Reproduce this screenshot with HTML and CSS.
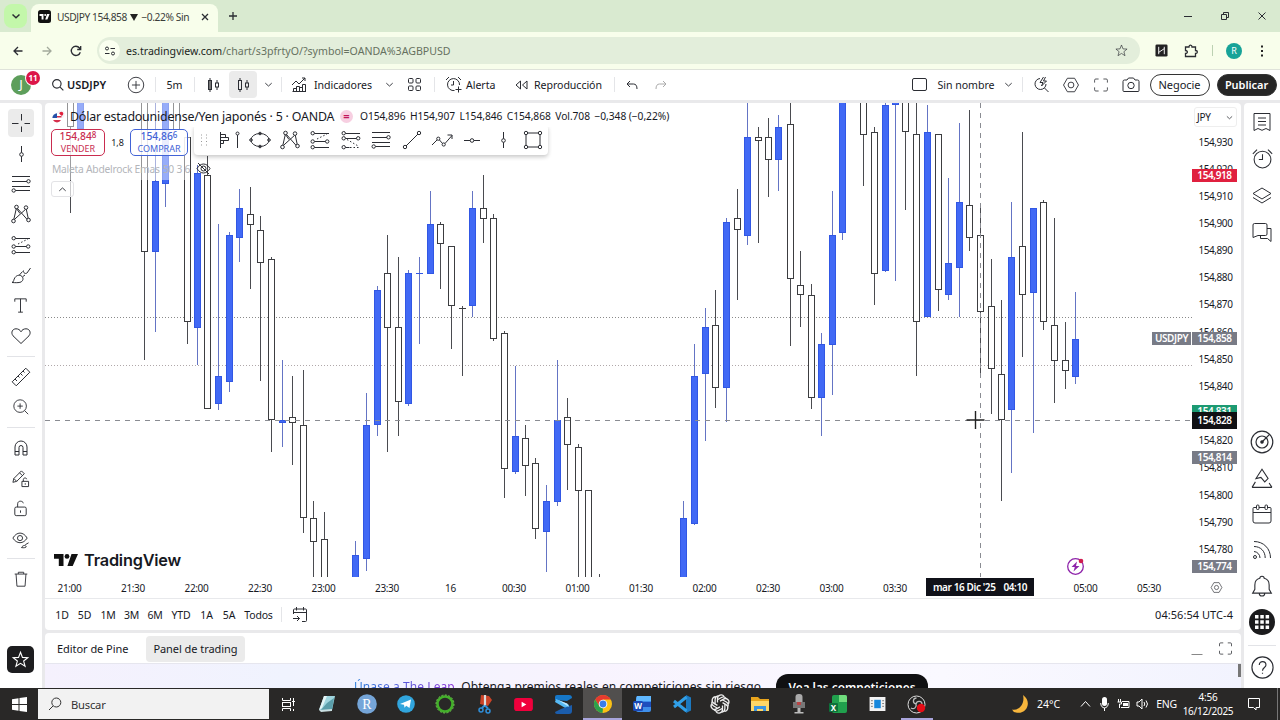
FILE: index.html
```html
<!DOCTYPE html>
<html lang="es">
<head>
<meta charset="utf-8">
<title>USDJPY 154,858 ▼ −0.22% Sin nombre</title>
<link rel="stylesheet" href="styles.css">
</head>
<body>
<svg class="defs" width="0" height="0">
  <symbol id="chev" viewBox="0 0 12 12"><path d="M2.5 4.5 6 7.7l3.5-3.2"/></symbol>
  <symbol id="search" viewBox="0 0 20 20"><circle cx="9" cy="9" r="6.5"/><path d="m14 14 5 5"/></symbol>
  <symbol id="pluscircle" viewBox="0 0 20 20"><circle cx="10" cy="10" r="8.6"/><path d="M10 5.5v9M5.5 10h9"/></symbol>
  <symbol id="hex" viewBox="0 0 20 20"><path d="M6 2.5h8l4.3 7.5L14 17.500H6L1.700 10z"/><circle cx="10" cy="10" r="3.200"/></symbol>
  <symbol id="cross" viewBox="0 0 20 20"><path d="M10.500 1v6.500M10.500 13.500V19M1 10.500h6.500M13.500 10.500H19"/></symbol>
  <symbol id="vline" viewBox="0 0 20 20"><path d="M10.500 2v6.700M10.500 12.300V18"/><circle cx="10.500" cy="10.500" r="1.800"/></symbol>
  <symbol id="hline" viewBox="0 0 20 20"><path d="M2 10.500h6.200M11.800 10.500H18"/><circle cx="10" cy="10.500" r="1.800"/></symbol>
  <symbol id="fib" viewBox="0 0 20 20"><path d="M1 2.500h18M1 7.500h15M1 12.500h18M4.500 16.500H19"/><circle cx="17.500" cy="7.300" r="1.700"/><circle cx="2.700" cy="16.500" r="1.700"/></symbol>
  <symbol id="pattern" viewBox="0 0 20 20"><path d="M2.800 15.500 5.300 4.500M6.500 4.500l9.500 10.800M3.700 15.200l10.800-9.800M5.800 5 9 9.500M15.300 5.300l1.900 9"/><circle cx="5.500" cy="3" r="1.800"/><circle cx="15" cy="3.600" r="1.800"/><circle cx="2.500" cy="17" r="1.800"/><circle cx="17.500" cy="16" r="1.800"/></symbol>
  <symbol id="forecast" viewBox="0 0 20 20"><path d="M4.500 3.500H19M4.500 11.500h11M4.500 17.500H19"/><path stroke-dasharray="1.500 2" d="m7 9 10-5"/><circle cx="2.700" cy="3.200" r="1.700"/><circle cx="2.700" cy="11.500" r="1.700"/><circle cx="17.200" cy="11.500" r="1.700"/><circle cx="2.700" cy="17.200" r="1.700"/></symbol>
  <symbol id="forecast2" viewBox="0 0 20 20"><path d="M4.500 3.500H19M4.500 8.500h11M4.500 17.500h4"/><path stroke-dasharray="1.500 2" d="m6 9.500 12 7M9 17.500h10"/><circle cx="2.700" cy="3.200" r="1.700"/><circle cx="2.700" cy="8.300" r="1.700"/><circle cx="17.200" cy="8.300" r="1.700"/><circle cx="2.700" cy="17.200" r="1.700"/></symbol>
  <symbol id="brush" viewBox="0 0 20 20"><path d="M1 17.500c2-.5 1.500-3 3-5 2-2.600 5-3 7-1 1.800 2 1 4.300-1 5.500-2.200 1-6 .7-9 .5zM8 10.500l3.500-4M11.500 11.800l2.500-1.800M12.500 5.500c-.5 2.500 2 3.700 3.500 2.500L19.500 3"/></symbol>
  <symbol id="text" viewBox="0 0 20 20"><path d="M4 6V3h12v3M10 3v14M7.500 17h5"/></symbol>
  <symbol id="heart" viewBox="0 0 20 20"><path d="M10 17.500 2 9.800C-.5 6.500 1.500 2.800 5 2.800c2.200 0 4 1 5 3 1-2 2.800-3 5-3 3.500 0 5.500 3.700 3 7z"/></symbol>
  <symbol id="ruler" viewBox="0 0 20 20"><path d="M1.200 14.800 14.800 1.200l4 4L5.200 18.800zM4 12l2 2M7 9l1.500 1.500M9.500 6.500l2 2M12 4l1.500 1.500"/></symbol>
  <symbol id="zoomin" viewBox="0 0 20 20"><circle cx="9" cy="9" r="7"/><path d="m14 14 4 4M9 6v6M6 9h6"/></symbol>
  <symbol id="magnet" viewBox="0 0 20 20"><path d="M4 17V9a6 6 0 0 1 12 0v8h-4V9.500a2 2 0 0 0-4 0V17zM4 13.500h4M12 13.500h4"/></symbol>
  <symbol id="penlock" viewBox="0 0 20 20"><path d="m2 14 1-4L11 2l3 3-8 8zM9 4l3 3M3 10l3 3M11.500 13h7v5.500h-7zM13 13v-2c0-2 3.500-2 3.500-.3M15 15v1.500"/></symbol>
  <symbol id="unlock" viewBox="0 0 20 20"><rect x="4" y="8.500" width="12" height="9" rx="1.500"/><path d="M7 8.500V5c0-3.500 5.500-3.500 6-.5M10 12v2.500"/></symbol>
  <symbol id="eye" viewBox="0 0 20 20"><path d="M2 8.500C6 1.500 13 1.500 17 8.500c-4 6.500-11 6.500-15 0z"/><circle cx="9.500" cy="8.500" r="2.700"/><path d="M11 18.500c1.500-2.500 4-3 5-1 .5 1-3 1.500-5 1zM15 15.500l3.500-2"/></symbol>
  <symbol id="trash" viewBox="0 0 20 20"><path d="M3 4.500h14M7 4.500v-2h6v2M4.500 4.500l1 13.500h9l1-13.500"/></symbol>
  <symbol id="star" viewBox="0 0 20 20"><path d="m10 1.500 2.300 6 6.300.3-4.900 4 1.700 6.200-5.400-3.500L4.600 18l1.700-6.200-4.900-4 6.300-.3z"/></symbol>
  <symbol id="list" viewBox="0 0 20 20"><path d="M2 1.500h16v17l-4-2-4 1.800-4-1.800-4 2zM6 6h8M6 9.500h8M6 13h8"/></symbol>
  <symbol id="alarm" viewBox="0 0 20 20"><circle cx="10" cy="11" r="8"/><path d="M10 6v5H6.500M.8 5.500l4-4M19.200 5.500l-4-4"/></symbol>
  <symbol id="layers" viewBox="0 0 20 20"><path d="m10 3 9 5.500-9 5.500-9-5.500zM1 12.500l9 5.500 9-5.500"/></symbol>
  <symbol id="chat" viewBox="0 0 20 20"><path d="M2.500 1.500h11q1.500 0 1.500 1.500v9q0 1.500-1.500 1.500H6L1 15.500V3q0-1.500 1.500-1.500zM15 6.500h4v13l-3.500-3H8.500v-3"/></symbol>
  <symbol id="radar" viewBox="0 0 20 20"><circle cx="10" cy="10" r="9"/><circle cx="10" cy="10" r="5"/><path d="m10 10 6.500-6.500"/><circle cx="10" cy="10" r="1" fill="#131722"/></symbol>
  <symbol id="mount" viewBox="0 0 20 20"><path d="m10 2 5.500 8.500-3 3L9 9.500 4.500 10.500zM1 18.500h18M1 18.500l3-5M19 18.500l-2.500-4"/></symbol>
  <symbol id="cal" viewBox="0 0 20 20"><path d="M2 3.500h2.500M7 3.500h6M15.500 3.500H18q1 0 1 1V17q0 2-2 2H3q-2 0-2-2V4.500q0-1 1-1M1 8.500h18"/><rect x="4.500" y="1" width="2.500" height="4.500" rx="1"/><rect x="13" y="1" width="2.500" height="4.500" rx="1"/></symbol>
  <symbol id="feed" viewBox="0 0 20 20"><circle cx="3" cy="17" r="1.500"/><path d="M2 11.500a6.500 6.500 0 0 1 6 6.500M2 6.500C8.500 6.500 13.200 11 13.200 18M2 1.500C11.500 1.500 18.500 8.500 18.500 18"/></symbol>
  <symbol id="bell" viewBox="0 0 20 20"><path d="M1.500 16.500h17L16.500 13V9c0-4-2.500-5.500-4.500-6 0-2.500-4-2.500-4 0-2 .5-4.500 2-4.500 6v4zM7.500 16.500c0 3.500 5 3.500 5 0"/></symbol>
  <symbol id="help" viewBox="0 0 20 20"><circle cx="10" cy="10" r="9.200"/><path d="M7.200 7.800c0-4 5.800-3.700 5.800 0 0 2.200-3 2.200-3 5M10 14.500v1"/></symbol>
  <symbol id="full" viewBox="0 0 20 20"><path d="M2 7V4q0-1.500 1.500-1.500H7M13 2.500h3.500Q18 2.500 18 4v3M18 13v3q0 1.500-1.500 1.500H13M7 17.500H3.500Q2 17.500 2 16v-3"/></symbol>
</svg>

<div class="tabs">
  <div class="tabsearch"><svg width="12" height="12"><use href="#chev"/></svg></div>
  <div class="tab">
    <svg class="fav" width="13" height="13" viewBox="0 0 13 13"><rect width="13" height="13" rx="2.500" fill="#111"/><path d="M1.500 4h4v5.500H3.600V6H1.500zM9 4h2.600L9.400 9.500H7.200z" fill="#fff"/><circle cx="7.200" cy="4.900" r="1" fill="#fff"/></svg>
    <span class="tabtitle">USDJPY 154,858 <svg width="8" height="7" viewBox="0 0 8 7"><path d="M0 0h8L4 7z"/></svg> −0.22% Sin</span>
    <svg class="x" width="8" height="8" viewBox="0 0 8 8"><path d="m1 1 6 6M7 1 1 7"/></svg>
  </div>
  <svg class="newtab" width="10" height="10" viewBox="0 0 10 10"><path d="M5 1v8M1 5h8"/></svg>
  <div class="win">
    <svg width="10" height="10" viewBox="0 0 10 10"><path d="M1 5.500h8"/></svg>
    <svg width="10" height="10" viewBox="0 0 10 10"><path d="M1.500 3.500h5v5h-5zM3.500 3.500v-2h5v5h-2"/></svg>
    <svg width="10" height="10" viewBox="0 0 10 10"><path d="m1.500 1.500 7 7M8.500 1.500l-7 7"/></svg>
  </div>
</div>
<div class="nav">
  <svg width="12" height="12" viewBox="0 0 12 12"><path d="M10.500 6H2M6 2 2 6l4 4"/></svg>
  <svg class="dim" width="12" height="12" viewBox="0 0 12 12"><path d="M1.500 6H10M6 2l4 4-4 4"/></svg>
  <svg width="12" height="12" viewBox="0 0 12 12"><path d="M10.300 7.200A4.600 4.600 0 1 1 9.500 3L10.500 4.300M10.700 1v3.500H7.200"/></svg>
  <div class="omni">
    <span class="site"><svg width="12" height="12" viewBox="0 0 12 12"><circle cx="3" cy="3.500" r="1.500"/><circle cx="9" cy="8.500" r="1.500"/><path d="M6.500 3.500H11M1 8.500h4.500"/></svg></span>
    <span class="url">es.tradingview.com<i>/chart/s3pfrtyO/?symbol=OANDA%3AGBPUSD</i></span>
    <svg width="13" height="13"><use href="#star"/></svg>
  </div>
  <svg class="ext" width="13" height="13" viewBox="0 0 14 14"><rect x=".5" y=".5" width="13" height="13" rx="1.500" fill="#222"/><path stroke="#fff" stroke-width="1" d="M4 3v8M10 3v8M4 9l6-4"/></svg>
  <svg class="puz" width="14" height="14" viewBox="0 0 14 14"><path d="M1.500 3H5c0-2.500 3-2.500 3 0h3.500v3.500c2.500 0 2.500 3 0 3v3h-10V9.500c2.500 0 2.500-3 0-3z"/></svg>
  <span class="navsep"></span><span class="prof">R</span>
  <svg class="dots" width="4" height="14" viewBox="0 0 4 14"><path d="M1 1.500h2v2H1zM1 6h2v2H1zM1 10.500h2v2H1z"/></svg>
</div>

<header class="top">
  <div class="ava"><span>J</span><b>11</b></div>
  <div><svg class="bold" width="13" height="13"><use href="#search"/></svg></div>
  <div class="l strong">USDJPY</div>
  <div><svg width="18" height="18"><use href="#pluscircle"/></svg></div>
  <div class="sep"></div><div>5m</div><div class="sep"></div>
  <div><svg width="14" height="16" viewBox="0 0 14 16"><rect x="2.500" y="3.500" width="3" height="9" fill="#777"/><path d="M4 1v2M4 13v2M11 3v3M11 10v3"/><rect x="9.500" y="6" width="3" height="4"/></svg></div>
  <div class="sel"><svg width="14" height="16" viewBox="0 0 14 16"><rect x="2.500" y="3.500" width="3" height="9"/><path d="M4 1v2M4 13v2M11 3v3M11 10v3"/><rect x="9.500" y="6" width="3" height="4"/></svg></div>
  <div><svg width="11" height="11"><use href="#chev"/></svg></div><div class="sep"></div>
  <div><svg width="16" height="16" viewBox="0 0 16 16"><path d="M2.500 15v-3.500h3V15M5.500 15V9.500h3V15M8.500 15v-4.500h3V15M11.500 15V7.500h3V15M1.500 14.500h13M1 8l4-4 3 3 6-6M11 1h3v3"/></svg></div>
  <div class="l">Indicadores</div>
  <div><svg width="11" height="11"><use href="#chev"/></svg></div>
  <div><svg width="15" height="15" viewBox="0 0 15 15"><rect x="1.500" y="1.500" width="4.500" height="4.500" rx="1"/><rect x="9" y="1.500" width="4.500" height="4.500" rx="1"/><rect x="1.500" y="9" width="4.500" height="4.500" rx="1"/><rect x="9" y="9" width="4.500" height="4.500" rx="1"/></svg></div>
  <div class="sep"></div>
  <div><svg width="17" height="17" viewBox="0 0 17 17"><path d="M14.500 9A6 6 0 1 0 9.500 14.500M8.500 5v4H6M1 4l3-3M16 4l-3-3M13.500 10.500v6M10.500 13.500h6"/></svg></div>
  <div class="l">Alerta</div>
  <div><svg width="13" height="10" viewBox="0 0 13 10"><path d="M5.500 1v8L1 5zM12 1v8L7.500 5z"/></svg></div>
  <div class="l">Reproducción</div><div class="sep"></div>
  <div><svg width="12" height="10" viewBox="0 0 12 10"><path d="M4 1 1 4l3 3M1 4h6.500Q11 4 11 9"/></svg></div>
  <div><svg class="gray" width="12" height="10" viewBox="0 0 12 10"><path d="m8 1 3 3-3 3M11 4H4.500Q1 4 1 9"/></svg></div>
  <div></div>
  <div><svg width="17" height="15" viewBox="0 0 17 15"><rect x="1.500" y="1.500" width="14" height="12" rx="1.500"/></svg></div>
  <div>Sin nombre</div>
  <div><svg width="11" height="11"><use href="#chev"/></svg></div><div class="sep"></div>
  <div><svg width="17" height="17" viewBox="0 0 17 17"><path d="M7 2.500A5.500 5.500 0 1 0 13 8M11.500 12l4 4M10.500 1 7 6.500h3L8.500 10l5-5H10.500l2-4"/></svg></div>
  <div><svg width="18" height="18"><use href="#hex"/></svg></div>
  <div><svg width="16" height="16"><use href="#full"/></svg></div>
  <div><svg width="18" height="16" viewBox="0 0 18 16"><path d="M1 4.500Q1 3 2.500 3H5l1.500-2h5L13 3h2.500Q17 3 17 4.500v9q0 1-1 1H2q-1 0-1-1z"/><circle cx="9" cy="8.500" r="3.200"/></svg></div>
  <div><span class="pill">Negocie</span></div>
  <div><span class="pill dark">Publicar</span></div>
</header>

<main class="app">
  <nav class="left">
    <div class="on"><svg width="20" height="20"><use href="#cross"/></svg></div>
    <div><svg width="20" height="20"><use href="#vline"/></svg></div>
    <div><svg width="20" height="20"><use href="#fib"/></svg></div>
    <div><svg width="20" height="20"><use href="#pattern"/></svg></div>
    <div><svg width="20" height="20"><use href="#forecast"/></svg></div>
    <div><svg width="20" height="20"><use href="#brush"/></svg></div>
    <div><svg width="19" height="19"><use href="#text"/></svg></div>
    <div><svg width="20" height="20"><use href="#heart"/></svg></div>
    <hr>
    <div><svg width="20" height="20"><use href="#ruler"/></svg></div>
    <div><svg width="18" height="18"><use href="#zoomin"/></svg></div>
    <hr>
    <div><svg width="20" height="20"><use href="#magnet"/></svg></div>
    <div><svg width="19" height="19"><use href="#penlock"/></svg></div>
    <div><svg width="19" height="19"><use href="#unlock"/></svg></div>
    <div><svg width="19" height="19"><use href="#eye"/></svg></div>
    <hr class="last">
    <div><svg width="18" height="18"><use href="#trash"/></svg></div>
    <div class="fav-btn"><svg width="17" height="17"><use href="#star"/></svg></div>
  </nav>

  <section class="mid">
    <div class="chart">
      <div class="plot">
        <svg id="canvas" width="1147" height="474" viewBox="45 103 1147 474"></svg>
        <div class="veil"></div>
        <div class="legend">
          <div class="title">
            <svg width="13" height="13" viewBox="0 0 13 13"><circle cx="8.800" cy="4.200" r="4" fill="#f4f4f8"/><circle cx="9.300" cy="3.800" r="2" fill="#e2213c"/><circle cx="5" cy="8" r="4.700" fill="#fff"/><path d="M1 10a4.500 4.500 0 0 0 8 0zM5 6h4.500v1.500H5z" fill="#d6304c"/><path d="M5 3.300V8H.4A4.700 4.700 0 0 1 5 3.300z" fill="#2450a8"/></svg>
            <span class="name">Dólar estadounidense/Yen japonés · 5 · OANDA</span>
            <span class="delay">=</span>
            <span class="ohlc">O154,896</span><span class="ohlc">H154,907</span><span class="ohlc">L154,846</span><span class="ohlc">C154,868</span><span class="ohlc">Vol.708</span><span class="ohlc">−0,348 (−0,22%)</span>
          </div>
          <div class="quote">
            <div class="btn sell"><b>154,84<sup>8</sup></b><span>VENDER</span></div>
            <span class="spread">1,8</span>
            <div class="btn buy"><b>154,86<sup>6</sup></b><span>COMPRAR</span></div>
          </div>
          <div class="ind"><span>Maleta Abdelrock Emas</span><span class="nums">50 3 6</span>
            <svg width="15" height="13" viewBox="0 0 15 13"><path d="M1 6.500c3.500-6 9.500-6 13 0-3.500 6-9.500 6-13 0zM2 1l11 11"/><circle cx="7.500" cy="6.500" r="2.500"/></svg></div>
          <div class="fold"><svg width="11" height="11"><use href="#chev"/></svg></div>
        </div>
        <div class="tools">
          <svg class="grip" width="8" height="12" viewBox="0 0 8 12"><path d="M1 1h1M6 1h1M1 4h1M6 4h1M1 7.500h1M6 7.500h1M1 11h1M6 11h1"/></svg>
          <svg width="20" height="18" viewBox="0 0 20 18"><path d="M1.500 1v16M1.500 3.500h5v3h-5M1.500 6.500h8v3h-8M1.500 9.500h3v3h-3M18.500 4v13"/><circle cx="18.500" cy="2.500" r="1.500"/></svg>
          <svg width="22" height="18" viewBox="0 0 22 18"><ellipse cx="11" cy="9" rx="9" ry="6.500"/><circle cx="11" cy="2.500" r="1.300"/><circle cx="11" cy="15.500" r="1.300"/><circle cx="2" cy="9" r="1.300"/><circle cx="20" cy="9" r="1.300"/></svg>
          <svg width="20" height="20"><use href="#pattern"/></svg>
          <svg width="20" height="20"><use href="#forecast"/></svg>
          <svg width="20" height="20"><use href="#forecast2"/></svg>
          <svg width="20" height="20"><use href="#fib"/></svg>
          <svg width="20" height="20" viewBox="0 0 20 20"><path d="M4 16 16 4"/><circle cx="3" cy="17" r="1.700"/><circle cx="17" cy="3" r="1.700"/></svg>
          <svg width="22" height="16" viewBox="0 0 22 16"><path d="m1 13 5-5M8.500 8l3 3.500M14 11.500l7-8M16.500 3H21v4"/><circle cx="7.300" cy="6.700" r="1.600"/><circle cx="12.700" cy="12.500" r="1.600"/></svg>
          <svg width="20" height="20"><use href="#hline"/></svg>
          <svg width="20" height="20"><use href="#vline"/></svg>
          <svg width="20" height="20" viewBox="0 0 20 20"><path d="M5 3h10M5 17h10M3 5v10M17 5v10"/><circle cx="3" cy="3" r="1.700"/><circle cx="17" cy="3" r="1.700"/><circle cx="3" cy="17" r="1.700"/><circle cx="17" cy="17" r="1.700"/></svg>
        </div>
        <div class="brand"><svg width="24" height="12" viewBox="0 0 24 12"><path d="M0 0h9.500v12H4.800V4.800H0zM17.500 0H24l-5.300 12h-5.300z"/><circle cx="13" cy="2.400" r="2.400"/></svg><span>TradingView</span></div>
        <svg class="flash" width="19" height="19" viewBox="0 0 19 19"><circle cx="9.500" cy="9.500" r="7.800" fill="#fff" stroke="#8e24aa" stroke-width="1.300"/><path fill="#8e24aa" d="m11 4.500-5.500 5.500h3.300L7.500 14.500 13.500 9H10z"/><circle cx="15" cy="4" r="2.300" fill="#d01c50"/></svg>
        <span class="tag sym">USDJPY</span>
      </div>
      <div class="scale">
        <div class="cur">JPY<svg width="9" height="9"><use href="#chev"/></svg></div>
        <div class="prices"><span>154,930</span><span>154,920</span><span>154,910</span><span>154,900</span><span>154,890</span><span>154,880</span><span>154,870</span><span>154,860</span><span>154,850</span><span>154,840</span><span></span><span>154,820</span><span>154,810</span><span>154,800</span><span>154,790</span><span>154,780</span></div>
        <span class="tag p1">154,918</span><span class="tag p2">154,858</span><span class="tag p3">154,831</span><span class="tag p4">154,828</span><span class="tag p5">154,814</span><span class="tag p6">154,774</span>
      </div>
    </div>
    <div class="time">
      <div class="ticks"><span>21:00</span><span>21:30</span><span>22:00</span><span>22:30</span><span>23:00</span><span>23:30</span><span>16</span><span>00:30</span><span>01:00</span><span>01:30</span><span>02:00</span><span>02:30</span><span>03:00</span><span>03:30</span><span></span><span></span><span>05:00</span><span>05:30</span></div>
      <svg width="13" height="13"><use href="#hex"/></svg>
      <div class="now"><span>mar 16 Dic '25</span><span>04:10</span></div>
    </div>
    <div class="ranges">
      <span>1D</span><span>5D</span><span>1M</span><span>3M</span><span>6M</span><span>YTD</span><span>1A</span><span>5A</span><span>Todos</span><span class="sep"></span>
      <span><svg width="16" height="17" viewBox="0 0 16 17"><path d="M1.500 8V4Q1.500 3 2.500 3h11q1 0 1 1v10.500q0 1-1 1H10M1.500 6.500h13M4.500 1v3.500M11.500 1v3.500M1 12.500h6.500M5 10l2.500 2.500L5 15"/></svg></span>
      <span></span><span class="clock">04:56:54 UTC-4</span>
    </div>
    <div class="panel">
      <span>Editor de Pine</span><span class="act">Panel de trading</span><i></i>
      <svg class="min" width="12" height="12" viewBox="0 0 12 12"><path d="M.5 11.500h11"/></svg>
      <svg width="15" height="15"><use href="#full"/></svg>
    </div>
    <div class="promo"><span class="ptxt"><em>Únase a The Leap.</em> Obtenga premios reales en competiciones sin riesgo</span><span class="pbtn">Vea las competiciones</span><u></u></div>
  </section>

  <aside class="right">
    <div><svg width="20" height="20"><use href="#list"/></svg></div>
    <div><svg width="21" height="21"><use href="#alarm"/></svg></div>
    <div><svg width="20" height="20"><use href="#layers"/></svg></div>
    <div><svg width="20" height="20"><use href="#chat"/></svg></div>
    <div class="gap"></div>
    <div><svg width="24" height="24"><use href="#radar"/></svg></div>
    <div><svg width="22" height="22"><use href="#mount"/></svg></div>
    <div><svg width="20" height="20"><use href="#cal"/></svg></div>
    <div><svg width="20" height="20"><use href="#feed"/></svg></div>
    <div><svg width="22" height="22"><use href="#bell"/></svg></div>
    <div><svg class="apps" width="26" height="26" viewBox="0 0 26 26"><circle cx="13" cy="13" r="13" fill="#1b1b1d"/><path fill="#fff" d="M6 6h3.500v3.500H6zM11.300 6h3.500v3.500h-3.500zM16.600 6h3.500v3.500h-3.500zM6 11.300h3.500v3.500H6zM11.300 11.300h3.500v3.500h-3.500zM16.600 11.300h3.500v3.500h-3.500zM6 16.600h3.500v3.500H6zM11.300 16.600h3.500v3.500h-3.500zM16.600 16.600h3.500v3.500h-3.500z"/></svg></div>
    <hr>
    <div><svg width="23" height="23"><use href="#help"/></svg></div>
  </aside>
</main>

<footer class="bar">
  <div class="start"><svg width="15" height="15" viewBox="0 0 15 15"><path fill="#fff" d="M0 2.200 6.500 1.200V7H0zM7.500 1 15 0v7H7.500zM0 8h6.500v5.800L0 12.800zM7.500 8H15v7L7.500 14z"/></svg></div>
  <div class="find"><svg width="14" height="14" viewBox="0 0 14 14"><circle cx="8.300" cy="5.500" r="4.500"/><path d="M5 9 1 13"/></svg><span>Buscar</span></div>
  <div class="apps-row">
    <div><svg width="15" height="15" viewBox="0 0 15 15" stroke="#fff"><path d="M1.500 1v2.500h8V1M1.500 14v-2.500h8V14M12.500 1v8M12.500 12v2"/><rect x="1.500" y="5.500" width="8" height="4"/><path d="M11 4.500h3"/></svg></div>
    <div><svg width="18" height="18" viewBox="0 0 18 18"><path fill="#9fd5de" d="M6 1h11l-3 14H1z"/><path fill="#5a9eaa" d="m9 8 7-5-2 12-12 1z"/><path fill="#e5f5f6" d="M6 1h3L4 13l-3 2z"/><path fill="#c9dfe2" d="m1 15 13-1v2L3 17z"/></svg></div>
    <div><svg width="20" height="20" viewBox="0 0 20 20"><circle cx="10" cy="10" r="9.800" fill="#75a5d8"/><text x="10" y="14.500" text-anchor="middle" font-family="Liberation Serif, serif" font-size="14" fill="#fff">R</text></svg></div>
    <div><svg width="18" height="18" viewBox="0 0 18 18"><circle cx="9" cy="9" r="8.800" fill="#31a5dd"/><path fill="#fff" d="m3 9 11-4.500L12.500 13l-3.300-2.300-1.700 2-.5-3z"/></svg></div>
    <div><svg width="20" height="20" viewBox="0 0 20 20"><circle cx="10" cy="10" r="7.500" fill="none" stroke="#43b02a" stroke-width="2.600"/><circle cx="10" cy="10" r="9" fill="none" stroke="#6ecb4e" stroke-dasharray="2 1.500"/></svg></div>
    <div><svg width="18" height="20" viewBox="0 0 18 20"><path fill="#cc4327" d="m5 1 8 1 3 4-4 6-8-2z"/><path stroke="#ddd" stroke-width="2.200" d="M9 1v12"/><path stroke="#2f8ed8" stroke-width="1.800" fill="none" d="M8.500 11.500 6 14M9 11.500l3 3"/><circle cx="5" cy="16" r="2" fill="none" stroke="#2f8ed8" stroke-width="1.500"/><circle cx="12" cy="17" r="2" fill="none" stroke="#2f8ed8" stroke-width="1.500"/></svg></div>
    <div><svg width="19" height="15" viewBox="0 0 20 16"><rect y="1" width="20" height="14" rx="3" fill="#f0003c"/><path fill="#fff" d="m8 5 5 3-5 3z"/></svg></div>
    <div><svg width="17" height="19" viewBox="0 0 17 19"><path fill="#1677c8" d="M0 2q0-2 2-2h12q3 0 3 3l-5 3-12-1z"/><path fill="#56baf5" d="m1 4 12 5 4 6-5-1L0 7z"/><path fill="#1b5dac" d="M17 10v6q0 3-3 3H2q-2 0-2-2l6-3z"/><path fill="#bfe7ff" d="m3 5 9 3.500L14 12z"/></svg></div>
    <div class="cur-app"><svg width="18" height="18" viewBox="0 0 18 18"><circle cx="9" cy="9" r="9" fill="#fbc116"/><path fill="#e53a30" d="M1.200 4.500A9 9 0 0 1 16.800 4.500H9L5 11z"/><path fill="#2ba24c" d="M1.200 4.500 5.500 11.500 9 13.500 8.500 18A9 9 0 0 1 1.200 4.500z"/><circle cx="9" cy="9" r="4.300" fill="#fff"/><circle cx="9" cy="9" r="3.400" fill="#397de9"/></svg></div>
    <div><svg width="18" height="18" viewBox="0 0 18 18"><rect x="3" y="1" width="15" height="16" rx="2" fill="#3f8fea"/><path fill="#1e4fbd" d="M3 7h15v5H3z"/><path fill="#60b8ff" d="M4 1h14v5H3z"/><rect y="6" width="10" height="10" rx="1.500" fill="#1b49b5"/><text x="5" y="14" text-anchor="middle" font-size="8" font-weight="700" fill="#fff">W</text></svg></div>
    <div><svg width="19" height="18" viewBox="0 0 19 18"><path fill="#1c79c0" d="M14 0v18l5-2.500v-13z"/><path fill="none" stroke="#31a0e8" stroke-width="3" d="M14.500 2 2 12M14.500 16 2 6"/></svg></div>
    <div><svg width="20" height="20" viewBox="0 0 20 20" fill="none" stroke="#eee" stroke-width="1.300"><g id="petal"><path fill="none" d="M7.500 8.500V4.500a3.600 3.600 0 0 1 6.600-2M7.500 5.800l4-2.300a3.600 3.600 0 0 1 4.500.8"/></g><use href="#petal" transform="rotate(60 10 10)"/><use href="#petal" transform="rotate(120 10 10)"/><use href="#petal" transform="rotate(180 10 10)"/><use href="#petal" transform="rotate(240 10 10)"/><use href="#petal" transform="rotate(300 10 10)"/></svg></div>
    <div><svg width="18" height="16" viewBox="0 0 18 16"><path fill="#e9a51d" d="M0 1h7l2 2h9v12H0z"/><path fill="#ffd667" d="M0 5h18v10H0z"/><path fill="#3c94df" d="M3 15v-5h12v5h-3v-2H6v2z"/></svg></div>
    <div><svg width="12" height="20" viewBox="0 0 12 20"><rect x="2.500" width="7" height="12" rx="3" fill="#aaa"/><path fill="#777" d="M0 8h12v6H0z"/><path fill="#bbb" d="M4.500 14h3v4h3v1.500h-9V18h3z"/><rect x="4" y="8" width="4" height="3" fill="#b44"/></svg></div>
    <div><svg width="18" height="18" viewBox="0 0 18 18"><rect x="3" width="15" height="18" rx="2" fill="#20a04d"/><path fill="#70dc7d" d="M10 0h6q2 0 2 2v5h-8z"/><rect y="8" width="9" height="9" rx="1" fill="#0d713a"/><text x="4.500" y="15.500" text-anchor="middle" font-size="8" font-weight="700" fill="#fff">X</text></svg></div>
    <div><svg width="17" height="14" viewBox="0 0 17 15"><rect width="17" height="15" fill="#f2f2f2"/><path fill="#1687dc" d="M5 3h7v9H5z"/><path stroke="#777" d="M1.500 4h2M1.500 7h2M1.500 10h2M13.500 4h2M13.500 7h2M13.500 10h2"/></svg></div>
    <div class="run"><svg width="19" height="19" viewBox="0 0 19 19"><circle cx="9.500" cy="9.500" r="8.500" fill="#222" stroke="#ddd"/><path fill="none" stroke="#bbb" stroke-width="1.300" d="M9 9C5 8 6 3 9.500 3M9 9c1-4 6-3 6 0M9 9c1 3-2 6-5 4"/><circle cx="14" cy="13" r="4.200" fill="#e50d17"/></svg></div>
  </div>
  <div class="tray">
    <div><svg width="18" height="18" viewBox="0 0 18 18"><path fill="#f7b63c" d="M11 0c10 7 3 20-7 17.500Q1 17 0 14.500C8 16 13 8 11 0z"/></svg></div>
    <div class="l">24°C</div>
    <div><svg width="11" height="8" viewBox="0 0 11 8" stroke="#fff"><path d="m1 6.500 4.500-5 4.500 5"/></svg></div>
    <div><svg width="9" height="14" viewBox="0 0 9 14"><rect x="2" width="5" height="9" rx="2.500" fill="#fff"/><path stroke="#fff" d="M.7 6c0 6.500 7.600 6.500 7.600 0M4.500 11v3"/></svg></div>
    <div><svg width="13" height="10" viewBox="0 0 13 10"><path stroke="#fff" d="M5 2.500h7v6H4M1.500 0v3M3.500 0v3M.5 3h4v2h-2v4"/><path fill="#fff" d="M6 4h5v3H6z"/></svg></div>
    <div><svg width="14" height="12" viewBox="0 0 14 12" stroke="#fff"><path d="M1 4h2l3-3v10L3 8H1zM8 4q1.500 2 0 4M10 2.500q3 3.500 0 7"/></svg></div>
    <div>ENG</div>
    <div class="when"><span>4:56</span><span>16/12/2025</span></div>
    <div><svg width="14" height="14" viewBox="0 0 14 14" stroke="#fff"><path d="M1.500 1.500h11v9H9V13l-2.500-2.500h-5z"/></svg></div>
    <div class="edge"></div>
  </div>
</footer>
<script src="chart.js"></script>
</body>
</html>
```
FILE: styles.css
```css
* { box-sizing: border-box; }
html, body { margin: 0; width: 1280px; height: 720px; overflow: hidden; }
body { font-family: "Noto Sans", "Open Sans", sans-serif; font-size: 11px; color: #17191f; background: #fff; display: grid; grid-template-rows: 32px 38px 30px 588px 32px; }
svg { fill: none; stroke: #2b2d33; stroke-width: 1; display: block; flex: none; overflow: visible; }
symbol { overflow: visible; }
.defs { position: absolute; }
body > .app { grid-row: 4; }

.tabs { background: #d9ead0; display: flex; align-items: center; grid-row: 1; }
.tabsearch { width: 23px; height: 24px; margin-left: 4px; border-radius: 8px; background: #c3f7aa; display: grid; place-items: center; }
.tabsearch svg { stroke-width: 1.500; }
.tab { width: 187px; height: 28px; margin: 4px 0 0 4px; background: #f8feeb; border-radius: 8px 8px 0 0; display: flex; align-items: center; padding: 0 9px 3px 7px; }
.fav, .apps { stroke: none; }
.tabtitle { font-size: 10.200px; letter-spacing: -.4px; margin-left: 6px; width: 133px; white-space: nowrap; color: #3a3c38; }
.tabtitle svg { display: inline-block; fill: #222; stroke: none; margin: 0 1px; }
.x, .newtab { stroke-width: 1.300; margin-left: auto; }
.newtab { margin-left: 10px; }
.win { margin-left: auto; display: flex; gap: 27px; padding-right: 13px; }

.nav { grid-row: 2; background: #f8feeb; border-bottom: 1px solid #dfe3da; display: flex; align-items: center; padding: 0 16px 0 12px; }
.nav > svg { stroke-width: 1.300; }
.nav > svg:nth-child(-n+3) { margin-right: 17px; }
.nav > .dim { stroke: #a3aa9c; }
.omni { width: 1043px; height: 27px; border-radius: 14px; background: #e3eedb; display: flex; align-items: center; padding: 0 12px 0 2px; margin-left: -2px; }
.site { width: 21px; height: 21px; border-radius: 50%; background: #fafff0; display: grid; place-items: center; }
.url { font-size: 10.600px; margin: 0 auto 0 6px; color: #20251d; }
.url i { font-style: normal; color: #66715f; }
.nav > .ext { margin-left: 15px; stroke: none; }
.nav > .puz { margin-left: 16px; }
.navsep { width: 1px; height: 11px; background: #bcd1b2; margin-left: 14px; }
.prof { width: 16px; height: 16px; margin-left: 13px; border-radius: 50%; background: #17a398; color: #fff; font-size: 9px; text-align: center; line-height: 16px; }
.nav > .dots { margin-left: auto; fill: #222; stroke: none; }

.top { grid-row: 3; display: grid; grid-template-columns: 47px 20px 54px 30px 8px 31px 8px 30px 30px 20px 6px 30px 65px 21px 28px 12px 26px 42px 26px 76px 8px 27px 32px 1fr 30px 64px 20px 8px 30px 30px 30px 30px 67px 67px; font-size: 10.600px; letter-spacing: -.05px; }
.top > div { display: flex; align-items: center; justify-content: center; white-space: nowrap; padding-bottom: 1px; }
.top > .l, .tray > .l { justify-content: flex-start; }
.top > .strong { font-weight: 600; font-size: 11px; letter-spacing: 0; }
.bold { stroke-width: 1.800; }
.gray { stroke: #aaa; }
.top > .sep::before, .ranges > .sep::before { content: ""; width: 1px; height: 15px; background: #e4e5e8; }
.top > .sel { background: #ebebeb; border-radius: 4px; margin: 1px 1px 2px; padding: 0; }
.top > .ava { justify-content: flex-start; padding-left: 11px; position: relative; }
.ava span { width: 20px; height: 20px; border-radius: 50%; background: #5d9e5b; color: #fff; font-size: 13px; line-height: 19px; text-align: center; }
.ava b { position: absolute; left: 26px; top: 1px; width: 14px; height: 14px; border-radius: 50%; background: #dc1648; color: #fff; font-size: 8px; line-height: 14px; text-align: center; box-shadow: 0 0 0 1px #fff; }
.pill { width: 60px; height: 22px; line-height: 20px; border: 1px solid #333; border-radius: 11px; text-align: center; font-size: 11px; }
.dark { background: #262626; color: #fff; font-weight: 600; }

.app { background: #e9e9eb; display: grid; grid-template-columns: 42px 1196px 36px; column-gap: 3px; padding-top: 3px; }
.left { background: #fff; display: flex; flex-direction: column; align-items: center; padding: 5px 1px 0 0; border-top-right-radius: 4px; }
.left > div { width: 28px; height: 30.400px; display: grid; place-items: center; }
.left > .on { position: relative; z-index: 0; }
.left > .on::before { content: ""; position: absolute; inset: 1px; background: #ebebeb; border-radius: 4px; z-index: -1; }
.left hr { width: 28px; border: 0; border-top: 1px solid #e2e3e7; margin: 5px 0 4.400px; }
.left hr.last { margin: 4px 0 5px; }
.left > .fav-btn { width: 27px; height: 27px; background: #1d1d1f; border-radius: 5px; margin-top: 51.500px; }
.fav-btn svg { stroke: #fff; stroke-width: 1.300; }
.right { background: #fff; display: flex; flex-direction: column; align-items: center; padding-top: 1px; border-top-left-radius: 4px; }
.right > div { height: 36px; display: grid; place-items: center; }
.right > div:nth-child(-n+4) { height: 36.600px; }
.right > .gap { height: 173.600px; }
.right hr { width: 28px; border: 0; border-top: 1px solid #e2e3e7; margin: 5px 0 4px; }

.mid { display: grid; grid-template-rows: 474px 22px 31px 34px 24px; min-width: 0; }
.chart { display: grid; grid-template-columns: 1147px 49px; background: #fff; border-radius: 4px 4px 0 0; }
.plot { position: relative; overflow: hidden; }
.veil { position: absolute; left: 5px; top: 0; width: 140px; height: 77px; background: rgba(255,255,255,.45); }
.legend { position: absolute; left: 7px; top: 5px; display: flex; flex-direction: column; }
.title { display: flex; align-items: center; height: 16px; white-space: nowrap; }
.title svg { stroke: none; }
.name { font-size: 12.400px; letter-spacing: -.2px; margin-left: 5px; width: 264px; }
.delay { width: 13px; height: 13px; border-radius: 50%; background: #f7cfe1; color: #c2185b; font-weight: 700; line-height: 12px; text-align: center; margin: 0 7px 0 6px; }
.ohlc { font-size: 10.250px; letter-spacing: -.06px; margin-right: 4.500px; }
.quote { display: flex; align-items: center; margin: 5px 0 0 -1px; }
.btn { height: 27px; border: 1px solid; border-radius: 5px; background: rgba(255,255,255,.8); display: flex; flex-direction: column; align-items: center; justify-content: center; line-height: 11.500px; font-size: 9px; }
.btn b { font-size: 10.300px; font-weight: 500; }
.btn sup { font-size: 8px; line-height: 0; vertical-align: 2px; }
.sell { width: 54px; color: #c92c4f; }
.buy { width: 58px; color: #4263d6; }
.spread { width: 25px; text-align: center; font-size: 9px; }
.ind { display: flex; align-items: center; height: 15px; margin-top: 5px; font-size: 10.300px; letter-spacing: -.25px; color: #b3b5ba; white-space: nowrap; }
.nums { margin: 0 6px 0 3px; }
.fold { width: 23px; height: 16px; margin: 5px 0 0 -1px; border: 1px solid #e3e3e6; border-radius: 3px; display: grid; place-items: center; background: rgba(255,255,255,.7); }
.fold svg { transform: rotate(180deg); }
.tools { position: absolute; left: 149px; top: 22px; width: 354px; height: 30px; background: #fff; border-radius: 4px; box-shadow: 0 2px 4px rgba(0,0,0,.22); clip-path: inset(2px -6px -8px -6px); display: grid; grid-template-columns: 20px repeat(11, 30.400px); align-items: center; justify-items: center; }
.tools .grip { stroke: #999; }
.brand { position: absolute; left: 9px; top: 446px; display: flex; align-items: center; gap: 6px; font: 600 16.300px/22px "Inter", sans-serif; letter-spacing: -.2px; }
.brand svg { fill: #111; stroke: none; }
.flash { position: absolute; left: 1021px; top: 454px; stroke: none; }
.tag { position: absolute; left: 0; width: 45px; height: 13px; background: #787b86; color: #fff; font-size: 10px; font-weight: 600; letter-spacing: -.4px; line-height: 13px; text-align: center; overflow: hidden; }
.sym { left: 1107px; top: 229px; width: 39px; }
.p1 { top: 66px; background: #e0203f; }
.p2 { top: 229px; }
.p3 { top: 302px; background: #1c9a72; }
.p4 { top: 309px; height: 17px; line-height: 17px; background: #101114; }
.p5 { top: 348px; }
.p6 { top: 457px; }
.scale { position: relative; }
.cur { width: 43px; height: 20px; margin: 4px 0 0 2px; border: 1px solid #eee; border-radius: 3px; display: flex; align-items: center; justify-content: space-between; padding: 0 2px; font-size: 10px; letter-spacing: -.3px; }
.prices { display: flex; flex-direction: column; margin-top: 1.500px; width: 47px; font-size: 10px; letter-spacing: -.45px; text-align: center; }
.prices span { height: 27.160px; line-height: 27.160px; flex: none; }

.time { background: #fff; position: relative; display: flex; align-items: center; border-bottom: 1px solid #e8e9ec; }
.ticks { display: grid; grid-template-columns: repeat(18, 63.500px); margin-left: -7.300px; text-align: center; font-size: 10px; letter-spacing: -.35px; }
.time > svg { margin-left: 29px; }
.now { position: absolute; left: 881px; top: 1px; width: 108px; height: 18px; background: #101119; color: #fff; display: flex; justify-content: center; gap: 8px; font-size: 10px; font-weight: 600; letter-spacing: -.4px; line-height: 19px; white-space: nowrap; }
.ranges { background: #fff; display: grid; grid-template-columns: 22px 23px 24px 23px 24px 28px 23px 22px 37px 8px 30px 1fr auto; padding: 0 8px 0 6px; font-size: 10.500px; letter-spacing: -.2px; border-radius: 0 0 4px 4px; }
.ranges span { display: flex; align-items: center; justify-content: center; white-space: nowrap; }
.ranges .clock { font-size: 11px; letter-spacing: .05px; }
.panel { margin-top: 3px; background: #fff; display: flex; align-items: center; padding: 1px 8px 0 12px; border-radius: 4px 4px 0 0; border-bottom: 1px solid #e6e6ee; font-size: 11px; letter-spacing: -.05px; white-space: nowrap; }
.panel .act { background: #ebebeb; height: 26px; line-height: 26px; padding: 0 7px; border-radius: 4px; margin-left: 18px; }
.panel i { flex: 1; }
.panel svg:last-child { margin-left: 15px; }
.panel .min { stroke: #888; }
.promo { background: linear-gradient(90deg, #f5f1fd, #f0f3fe 20%, #f8f3fe 45%, #faf9ff 75%, #f2f3fe); display: flex; overflow: hidden; position: relative; padding-left: 309px; white-space: nowrap; height: 24px; }
.ptxt { font-size: 12px; letter-spacing: .08px; line-height: 16px; padding-top: 15px; width: 422px; }
.ptxt em { font-style: normal; color: transparent; background: linear-gradient(90deg, #2c7fd9, #8b30d5); background-clip: text; -webkit-background-clip: text; }
.pbtn { width: 152px; height: 30px; margin-top: 10px; border-radius: 12px; background: #101012; color: #fff; font-size: 11.800px; font-weight: 600; line-height: 26px; text-align: center; }
.promo u { margin-left: auto; width: 3px; height: 13px; background: #777; }

.bar { grid-row: 5; background: #292827; color: #fff; display: grid; grid-template-columns: 38px 230.500px 1fr 272px; }
.bar svg { stroke: none; }
.bar svg[stroke="#fff"] { stroke: #fff; }
.bar svg[stroke="#eee"] { stroke: #eee; stroke-width: 1.300; }
.start { display: grid; place-items: center; }
.find { background: #f2f2f2; color: #333; margin: 1px 0; display: flex; align-items: center; padding-left: 10px; gap: 9px; font-size: 11.200px; letter-spacing: -.2px; }
.find svg { stroke: #333; }
.apps-row { display: grid; grid-template-columns: repeat(17, 39.300px); }
.apps-row > div { display: grid; place-items: center; }
.apps-row .cur-app { background: #514f4e; box-shadow: inset 0 -2px #a9a5dc; }
.apps-row .run { background: linear-gradient(#a9a5dc, #a9a5dc) center bottom / 32px 2px no-repeat; }
.tray { display: grid; grid-template-columns: 26px 40px 22px 17px 21px 18px 29px 54px 38px 7px; font-size: 10.500px; letter-spacing: -.4px; }
.tray > div { display: flex; align-items: center; justify-content: center; white-space: nowrap; }
.tray > .l { padding-left: 3px; letter-spacing: 0; }
.tray > .when { flex-direction: column; font-size: 10px; line-height: 14px; letter-spacing: -.25px; }
.tray > .edge { border-left: 1px solid #777; margin-left: 4px; }
```
FILE: chart.js
```js
// Each bar: x, wick top, body top, body bottom, wick bottom, rising flag
const bars = [
  [70,103,100,126.5,213,0],[80.5,103,100,129,129,1],[144.5,103,100,251.5,360,0],[155,103,181,252,332,1],
  [165.5,103,100,184,207,1],[176,103,100,130,130,0],[187,137,137,322,344,0],[197,165,173,328,365,1],
  [207.5,156,175,409,409,0],[218,224,376,404,410,1],[229,232,235,382,392,1],[239.5,189,208,238,262,1],
  [250,187,213.5,224.5,289,0],[260.5,216,230,263,381,0],[271.5,257,259,420,452,0],[282,360,420,423,447,1],
  [292.5,376,417,423,465,0],[303,370,425,518,533,0],[313.5,501,518,542,577,0],[324.5,512,539,580,580,0],
  [355.5,541,555,580,580,1],[366.5,393,425,559,571,1],[377,286,290,425,436,1],[387.5,235,273,328,452,0],
  [398,257,327,402,436,0],[408.5,270,273,404,406,1],[419.5,257,273,273,344,1],[430,191,224,273.5,274,1],
  [440.5,222,224,244,289,0],[451,246,246,306,349,0],[462,306,308,308,376,0],[472.5,191,208,306,317,1],
  [483,175,208,219,243,0],[493.5,214,218,339,341,0],[504.5,331,333,469,498,0],[515,366,436,472,474,1],
  [525.5,425,438,466,496,0],[535.5,458,463,529,539,0],[546,485,501,532,572,1],[557,360,420,502,506,1],
  [567.5,398,417,445,490,0],[578,444,447,491,577,0],[588.5,490,490,580,580,0],[599.5,574,580,582,582,0],
  [683.5,501,518,580,580,1],[694.5,344,376,524,525,1],[705.3,308,327,374,441,1],[715.3,290,325,388,408,0],
  [726,218,222,388,422,1],[737,189,218,230,300,0],[747.5,103,137,235.5,245,1],[758,127,137,140.5,243,0],
  [768.5,118,137,159.5,197,0],[778.5,115,126.5,160,191,1],[790,103,123.5,278.5,346,0],[800.5,251,284.5,294.5,327,0],
  [811,284,294.5,398,409,0],[821.5,333,344,398,436,1],[832.5,191,235,345,395,1],[842.5,103,100,233,240,1],
  [863.5,103,100,134.5,186,0],[874,127,132,273.5,305,0],[885,103,105,271,272,1],[895.5,103,100,105,281,1],
  [905.5,103,100,132,210,0],[916.5,103,134,322,376,0],[927.5,105,132,317,317,1],[938,134,134,290,311,0],
  [948.5,178,262.5,295,300,1],[959,123,202,268,317,1],[969.5,110,205,238,251,0],[980.5,204,235,311.5,374,0],
  [991,259,306,368.5,414,0],[1001.5,300,373.5,420,501,0],[1011.5,202,257,409.5,473,1],[1022.5,132,245.5,294.5,357,0],
  [1033,208,208,293,433,1],[1043.5,200,202,322,330,0],[1054,218,325,360.5,403,0],[1065,322,360,371,389,0],
  [1075.5,292,338.5,377,384,1]
];
const line = (x1, y1, x2, y2, color, dash = '') =>
  `<line x1="${x1}" y1="${y1}" x2="${x2}" y2="${y2}" stroke="${color}" stroke-dasharray="${dash}"/>`;
let out = line(45, 317.5, 1192, 317.5, '#8a8a8a', '1 2') + line(45, 365.5, 1192, 365.5, '#b0a8aa', '1 2');
for (const [cx, wt, bt, bb, wb, up] of bars) {
  const x = Math.floor(cx) + 0.5, t = Math.round(bt) + 0.5, b = Math.max(t, Math.round(bb) - 0.5);
  const wick = up ? '#6474c4' : '#4a4b50', edge = up ? '#3157e4' : '#3c3d40';
  out += line(x, wt, x, Math.max(wt, t), wick) + line(x, b, x, wb, wick);
  out += b - t < 1
    ? line(x - 3.5, t, x + 3.5, t, edge)
    : `<rect x="${x - 3}" y="${t}" width="6" height="${b - t}" fill="${up ? '#4169f5' : '#fff'}" stroke="${edge}"/>`;
}
out += line(45, 420.5, 1192, 420.5, '#8a8c92', '5 5') + line(980.5, 103, 980.5, 577, '#8a8c92', '5 5');
out += '<path d="M966.5 420h18M975.5 411v18" stroke="#222" stroke-width="1.4"/>';
document.getElementById('canvas').innerHTML = out;
```
